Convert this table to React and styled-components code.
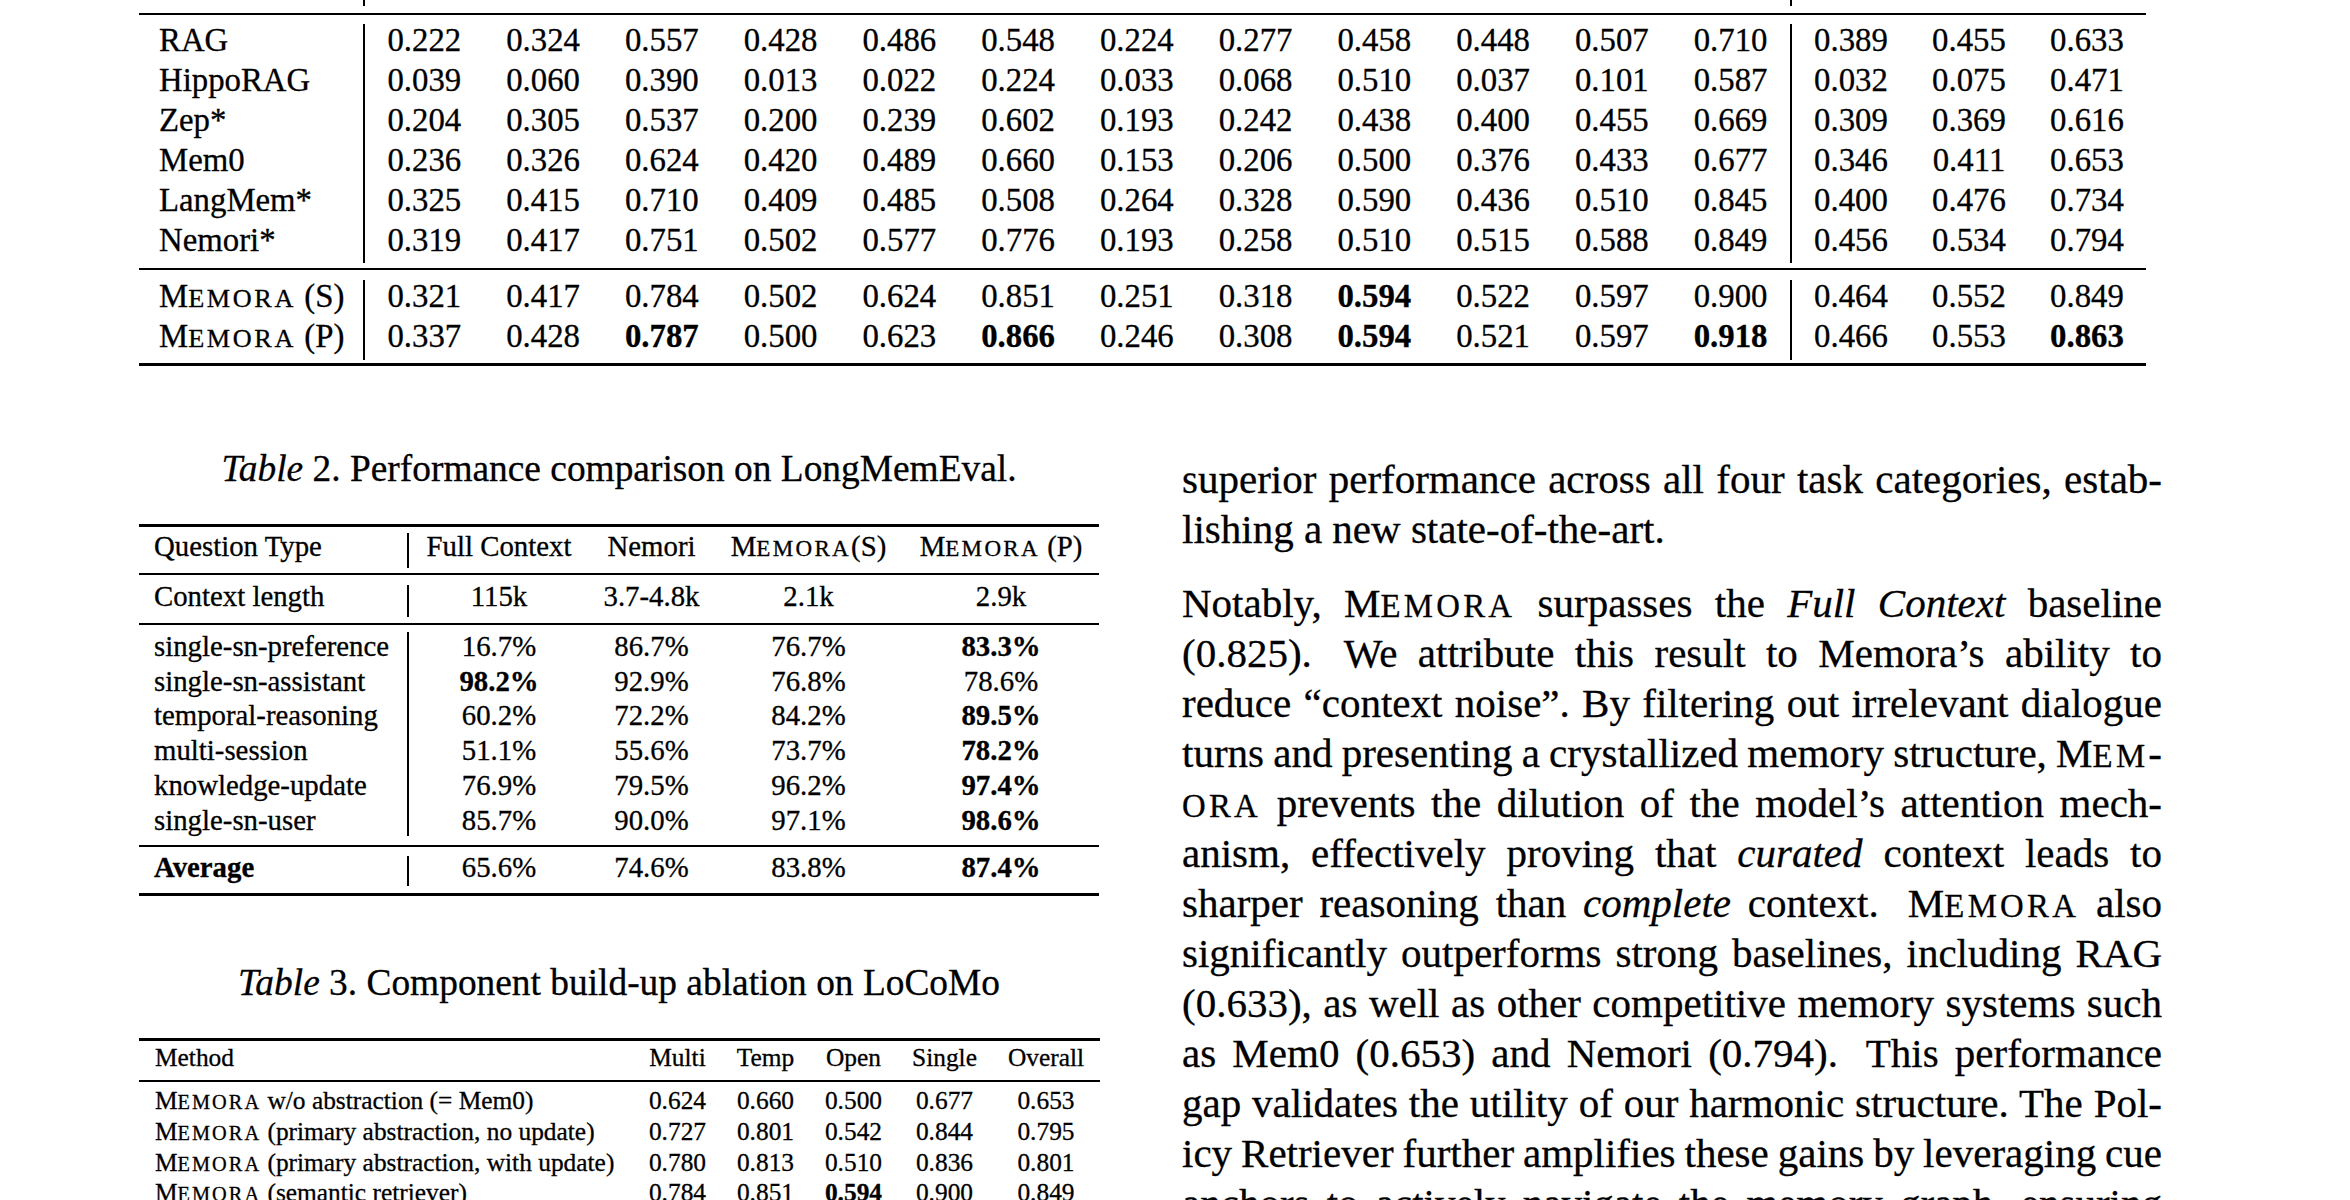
import React from "react";
import styled, { createGlobalStyle } from "styled-components";

const GlobalStyle = createGlobalStyle`
  html, body {
    margin: 0;
    padding: 0;
    background: #fff;
  }
  body {
    font-family: "Liberation Serif", "Times New Roman", serif;
    color: #000;
    -webkit-text-stroke: 0.3px #000;
  }
`;

const Page = styled.div`
  width: 2350px;
  height: 1200px;
  overflow: hidden;
  padding-left: 139px;
  box-sizing: border-box;
`;

const Rule = styled.div`
  height: ${(p) => p.$h || 2}px;
  background: #000;
`;

const TableBox = styled.div`
  width: ${(p) => p.$w}px;
  font-size: ${(p) => p.$fs}px;
  margin-top: ${(p) => p.$mt || 0}px;
`;

const Group = styled.div`
  display: grid;
  grid-template-columns: ${(p) => p.$cols};
  grid-auto-rows: ${(p) => p.$row}px;
  line-height: ${(p) => p.$row}px;
  padding: ${(p) => p.$pt || 0}px 0 ${(p) => p.$pb || 0}px;
`;

const Sep = styled.div`
  grid-column: ${(p) => p.$col};
  grid-row: 1 / span ${(p) => p.$span};
  background: #000;
  margin: ${(p) => p.$mt}px 0 ${(p) => p.$mb}px;
`;

const Cell = styled.div`
  text-align: center;
  white-space: nowrap;
  font-weight: ${(p) => (p.$b ? 700 : 400)};
`;

const Label = styled.div`
  padding-left: ${(p) => p.$pl}px;
  white-space: nowrap;
  font-weight: ${(p) => (p.$b ? 700 : 400)};
`;

// LaTeX \textsc: lowercase letters drawn as wide, short capitals
const Small = styled.span`
  font-size: 0.8em;
  line-height: 0;
  letter-spacing: 0.1em;
  text-transform: uppercase;
`;

const It = styled.span`
  font-style: italic;
`;

const Caption = styled.div`
  font-size: 37.4px;
  line-height: 45px;
  text-align: center;
  white-space: nowrap;
  margin-top: ${(p) => p.$mt}px;
`;

const Columns = styled.div`
  display: flex;
  align-items: flex-start;
`;

const LeftCol = styled.div`
  width: 960px;
  flex: none;
`;

const RightCol = styled.div`
  width: 980px;
  flex: none;
  margin-left: 83px;
  padding-top: 88px;
  font-size: 41px;
  line-height: 50px;
`;

const Para = styled.div`
  & + & {
    margin-top: 24px;
  }
`;

const Line = styled.div`
  height: 50px;
  text-align: ${(p) => (p.$last ? "left" : "justify")};
  text-align-last: ${(p) => (p.$last ? "left" : "justify")};
  word-spacing: ${(p) => (p.$last ? "normal" : "-0.06em")};
`;

const Gap = styled.span`
  display: inline-block;
  width: 0.3em;
`;

const Memora = ({ tail }) => (
  <>
    M<Small>emora</Small>
    {tail}
  </>
);

// ---------- Table 1 (LoCoMo by category) ----------
const T1_COLS = "224px 2px repeat(12, 118.75px) 2px repeat(3, 118px)";

const baselines = [
  ["RAG", "0.222 0.324 0.557 0.428 0.486 0.548 0.224 0.277 0.458 0.448 0.507 0.710 0.389 0.455 0.633"],
  ["HippoRAG", "0.039 0.060 0.390 0.013 0.022 0.224 0.033 0.068 0.510 0.037 0.101 0.587 0.032 0.075 0.471"],
  ["Zep*", "0.204 0.305 0.537 0.200 0.239 0.602 0.193 0.242 0.438 0.400 0.455 0.669 0.309 0.369 0.616"],
  ["Mem0", "0.236 0.326 0.624 0.420 0.489 0.660 0.153 0.206 0.500 0.376 0.433 0.677 0.346 0.411 0.653"],
  ["LangMem*", "0.325 0.415 0.710 0.409 0.485 0.508 0.264 0.328 0.590 0.436 0.510 0.845 0.400 0.476 0.734"],
  ["Nemori*", "0.319 0.417 0.751 0.502 0.577 0.776 0.193 0.258 0.510 0.515 0.588 0.849 0.456 0.534 0.794"],
];

const ours = [
  [" (S)", "0.321 0.417 0.784 0.502 0.624 0.851 0.251 0.318 0.594! 0.522 0.597 0.900 0.464 0.552 0.849"],
  [" (P)", "0.337 0.428 0.787! 0.500 0.623 0.866! 0.246 0.308 0.594! 0.521 0.597 0.918! 0.466 0.553 0.863!"],
];

const numCells = (str, key) =>
  str.split(" ").map((v, i) => (
    <Cell key={key + i} $b={v.endsWith("!")}>
      {v.replace("!", "")}
    </Cell>
  ));

const T1Seps = ({ span, mt, mb }) => (
  <>
    <Sep $col={2} $span={span} $mt={mt} $mb={mb} />
    <Sep $col={15} $span={span} $mt={mt} $mb={mb} />
  </>
);

const Table1 = () => (
  <TableBox $w={2007} $fs={32.8}>
    <Group $cols={T1_COLS} $row={13}>
      <T1Seps span={1} mt={0} mb={7} />
    </Group>
    <Rule $h={2} />
    <Group $cols={T1_COLS} $row={40} $pt={5} $pb={8}>
      <T1Seps span={6} mt={4} mb={-3} />
      {baselines.map(([name, vals]) => (
        <React.Fragment key={name}>
          <Label $pl={20}>{name}</Label>
          {numCells(vals, name)}
        </React.Fragment>
      ))}
    </Group>
    <Rule $h={2} />
    <Group $cols={T1_COLS} $row={40} $pt={6} $pb={7}>
      <T1Seps span={2} mt={4} mb={-4} />
      {ours.map(([tag, vals]) => (
        <React.Fragment key={tag}>
          <Label $pl={20}>
            <Memora tail={tag} />
          </Label>
          {numCells(vals, tag)}
        </React.Fragment>
      ))}
    </Group>
    <Rule $h={3} />
  </TableBox>
);

// ---------- Table 2 (LongMemEval) ----------
const T2_COLS = "268px 2px 180px 125px 189px 196px";

const lme = [
  ["single-sn-preference", "16.7% 86.7% 76.7% 83.3%!"],
  ["single-sn-assistant", "98.2%! 92.9% 76.8% 78.6%"],
  ["temporal-reasoning", "60.2% 72.2% 84.2% 89.5%!"],
  ["multi-session", "51.1% 55.6% 73.7% 78.2%!"],
  ["knowledge-update", "76.9% 79.5% 96.2% 97.4%!"],
  ["single-sn-user", "85.7% 90.0% 97.1% 98.6%!"],
];

const Table2 = () => (
  <TableBox $w={960} $fs={28.8} $mt={33}>
    <Rule $h={3} />
    <Group $cols={T2_COLS} $row={34.8} $pt={2} $pb={9.2}>
      <Sep $col={2} $span={1} $mt={4} $mb={-4} />
      <Label $pl={15}>Question Type</Label>
      <Cell>Full Context</Cell>
      <Cell>Nemori</Cell>
      <Cell>
        <Memora tail="(S)" />
      </Cell>
      <Cell>
        <Memora tail=" (P)" />
      </Cell>
    </Group>
    <Rule $h={2} />
    <Group $cols={T2_COLS} $row={34.8} $pt={4} $pb={9}>
      <Sep $col={2} $span={1} $mt={6} $mb={-3} />
      <Label $pl={15}>Context length</Label>
      {numCells("115k 3.7-4.8k 2.1k 2.9k", "ctx")}
    </Group>
    <Rule $h={2} />
    <Group $cols={T2_COLS} $row={34.8} $pt={4} $pb={7}>
      <Sep $col={2} $span={6} $mt={3} $mb={2} />
      {lme.map(([name, vals]) => (
        <React.Fragment key={name}>
          <Label $pl={15}>{name}</Label>
          {numCells(vals, name)}
        </React.Fragment>
      ))}
    </Group>
    <Rule $h={2} />
    <Group $cols={T2_COLS} $row={34.8} $pt={3} $pb={9}>
      <Sep $col={2} $span={1} $mt={6} $mb={-2} />
      <Label $pl={15} $b>
        Average
      </Label>
      {numCells("65.6% 74.6% 83.8% 87.4%!", "avg")}
    </Group>
    <Rule $h={3} />
  </TableBox>
);

// ---------- Table 3 (ablation) ----------
const T3_COLS = "495px 87px 89px 87px 95px 108px";

const ablation = [
  [" w/o abstraction (= Mem0)", "0.624 0.660 0.500 0.677 0.653"],
  [" (primary abstraction, no update)", "0.727 0.801 0.542 0.844 0.795"],
  [" (primary abstraction, with update)", "0.780 0.813 0.510 0.836 0.801"],
  [" (semantic retriever)", "0.784 0.851 0.594! 0.900 0.849"],
];

const Table3 = () => (
  <TableBox $w={961} $fs={25.4} $mt={33}>
    <Rule $h={3} />
    <Group $cols={T3_COLS} $row={30.7} $pt={1} $pb={7.3}>
      <Label $pl={16}>Method</Label>
      {numCells("Multi Temp Open Single Overall", "hd")}
    </Group>
    <Rule $h={2} />
    <Group $cols={T3_COLS} $row={30.7} $pt={3} $pb={8}>
      {ablation.map(([desc, vals]) => (
        <React.Fragment key={desc}>
          <Label $pl={16}>
            <Memora tail={desc} />
          </Label>
          {numCells(vals, desc)}
        </React.Fragment>
      ))}
    </Group>
    <Rule $h={3} />
  </TableBox>
);

const Body = () => (
  <RightCol>
    <Para>
      <Line>superior performance across all four task categories, estab-</Line>
      <Line $last>lishing a new state-of-the-art.</Line>
    </Para>
    <Para>
      <Line>
        Notably, <Memora /> surpasses the <It>Full Context</It> baseline
      </Line>
      <Line>
        (0.825).<Gap /> We attribute this result to Memora’s ability to
      </Line>
      <Line>reduce “context noise”. By filtering out irrelevant dialogue</Line>
      <Line>
        turns and presenting a crystallized memory structure, M<Small>em</Small>-
      </Line>
      <Line>
        <Small>ora</Small> prevents the dilution of the model’s attention mech-
      </Line>
      <Line>
        anism, effectively proving that <It>curated</It> context leads to
      </Line>
      <Line>
        sharper reasoning than <It>complete</It> context.<Gap /> <Memora /> also
      </Line>
      <Line>significantly outperforms strong baselines, including RAG</Line>
      <Line>(0.633), as well as other competitive memory systems such</Line>
      <Line>
        as Mem0 (0.653) and Nemori (0.794).<Gap /> This performance
      </Line>
      <Line>gap validates the utility of our harmonic structure. The Pol-</Line>
      <Line>icy Retriever further amplifies these gains by leveraging cue</Line>
      <Line>anchors to actively navigate the memory graph, ensuring</Line>
    </Para>
  </RightCol>
);

export default function App() {
  return (
    <>
      <GlobalStyle />
      <Page>
        <Table1 />
        <Columns>
          <LeftCol>
            <Caption $mt={80}>
              <It>Table</It> 2. Performance comparison on LongMemEval.
            </Caption>
            <Table2 />
            <Caption $mt={64}>
              <It>Table</It> 3. Component build-up ablation on LoCoMo
            </Caption>
            <Table3 />
          </LeftCol>
          <Body />
        </Columns>
      </Page>
    </>
  );
}
